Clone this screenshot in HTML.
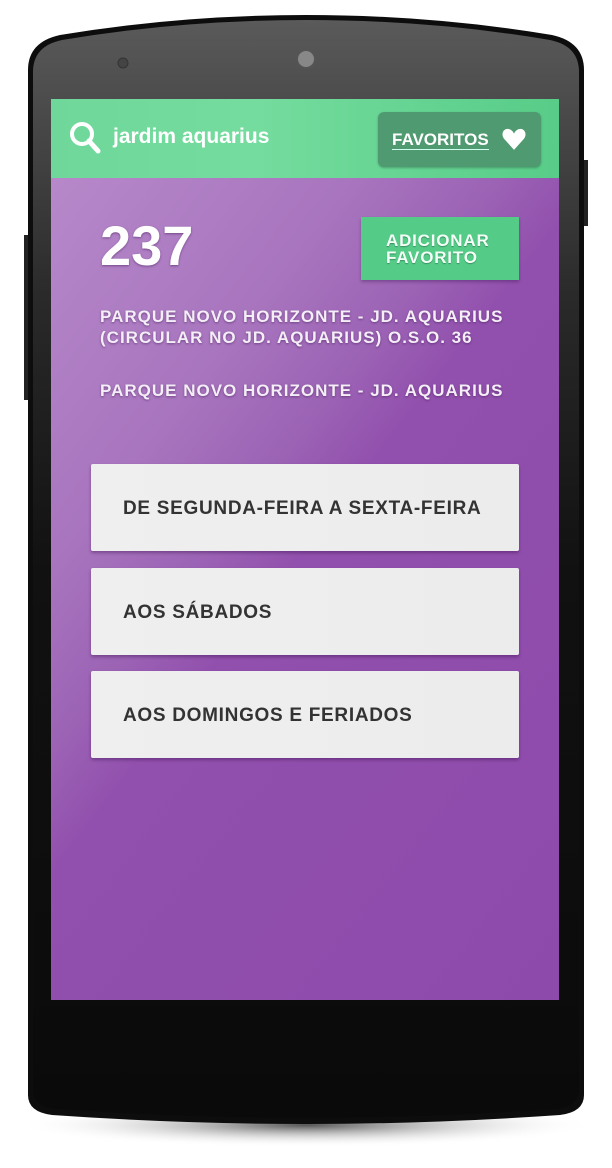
<!DOCTYPE html>
<html><head><meta charset="utf-8"><style>
*{margin:0;padding:0;box-sizing:border-box}
body{width:612px;height:1168px;background:#fff;position:relative;overflow:hidden;font-family:"Liberation Sans",sans-serif}
.abs{position:absolute}
.screen{left:51px;top:99px;width:508px;height:901px;background:linear-gradient(128deg,#b98ccc 0%,#a875be 30%,#9c63b5 42%,#9150ad 50%,#8e4aab 100%);overflow:hidden}
.hdr{left:0;top:0;width:508px;height:79px;background:linear-gradient(90deg,#6fd79a,#74dc9e 40%,#58cc88)}
.t{color:#f4eef7;font-weight:bold;text-shadow:0 1px 2px rgba(60,20,80,.5)}
.card{left:40px;width:428px;height:87px;background:linear-gradient(90deg,#efefef,#ececec);box-shadow:0 2px 3px rgba(40,0,60,.35);border-radius:2px;font-weight:bold;font-size:19px;letter-spacing:0.7px;color:#333;padding-left:32px;line-height:90px}
</style></head><body>
<svg class="abs" style="left:0;top:0" width="612" height="1168">
<defs>
<radialGradient id="sh" cx="0.5" cy="0.5" r="0.5"><stop offset="0" stop-color="#555"/><stop offset="1" stop-color="#fff" stop-opacity="0"/></radialGradient>
<linearGradient id="bd" x1="0" y1="0" x2="0" y2="1"><stop offset="0" stop-color="#5a5a5a"/><stop offset="0.25" stop-color="#2a2a2a"/><stop offset="0.5" stop-color="#111"/><stop offset="1" stop-color="#0a0a0a"/></linearGradient>
</defs>
<ellipse cx="306" cy="1125" rx="290" ry="22" fill="url(#sh)"/>
<rect x="24" y="235" width="6" height="165" fill="#222"/>
<rect x="582" y="160" width="6" height="66" fill="#222"/>
<path d="M28,70 Q28,42 60,35 Q180,15 306,15 Q432,15 552,35 Q584,42 584,70 L584,1095 Q584,1112 560,1115 Q430,1124 306,1124 Q182,1124 52,1115 Q28,1112 28,1095 Z" fill="#0d0d0d"/>
<path d="M33,72 Q33,46 62,40 Q180,20 306,20 Q432,20 550,40 Q579,46 579,72 L579,1090 Q579,1106 558,1109 Q430,1118 306,1118 Q182,1118 54,1109 Q33,1106 33,1090 Z" fill="url(#bd)"/>
<circle cx="123" cy="63" r="5" fill="#444" stroke="#333"/>
<circle cx="306" cy="59" r="9" fill="#888" stroke="#555" stroke-width="2"/>
</svg>
<div class="abs screen">
<div class="abs hdr">
<svg class="abs" style="left:18px;top:22px" width="34" height="34"><circle cx="13" cy="13" r="10" fill="none" stroke="#fff" stroke-width="4"/><path d="M20,20 L29,30" stroke="#fff" stroke-width="5" stroke-linecap="round"/></svg>
<div class="abs" style="left:62px;top:26px;color:#fff;font-size:21px;font-weight:bold;letter-spacing:0">jardim aquarius</div>
<div class="abs" style="left:327px;top:13px;width:163px;height:55px;background:#4f9a70;border-radius:6px;box-shadow:0 1px 2px rgba(0,0,0,.25)">
<div class="abs" style="left:14px;top:18px;color:#fff;font-size:17px;font-weight:bold;border-bottom:1px solid #cfe;line-height:19px">FAVORITOS</div>
<svg class="abs" style="left:123px;top:14px" width="26" height="26" viewBox="0 0 24 24"><path d="M12,22 L3,12 C-1,7 3,1 8,3 C10,4 11,5 12,7 C13,5 14,4 16,3 C21,1 25,7 21,12 Z" fill="#fff"/></svg>
</div>
</div>
<div class="abs t" style="left:49px;top:114px;font-size:56px;color:#fff">237</div>
<div class="abs" style="left:310px;top:118px;width:158px;height:63px;background:#54cc88;box-shadow:0 2px 3px rgba(40,0,60,.3);color:#f4fff8;font-weight:bold;font-size:17px;letter-spacing:0.8px;line-height:17px;padding:15px 0 0 25px;text-shadow:0 1px 1px rgba(0,0,0,.3)">ADICIONAR<br>FAVORITO</div>
<div class="abs t" style="left:49px;top:207px;font-size:17px;line-height:21px;letter-spacing:1px">PARQUE NOVO HORIZONTE - JD. AQUARIUS<br>(CIRCULAR NO JD. AQUARIUS) O.S.O. 36</div>
<div class="abs t" style="left:49px;top:282px;font-size:17px;letter-spacing:1px">PARQUE NOVO HORIZONTE - JD. AQUARIUS</div>
<div class="abs card" style="top:365px">DE SEGUNDA-FEIRA A SEXTA-FEIRA</div>
<div class="abs card" style="top:469px">AOS SÁBADOS</div>
<div class="abs card" style="top:572px">AOS DOMINGOS E FERIADOS</div>
</div>
</body></html>
